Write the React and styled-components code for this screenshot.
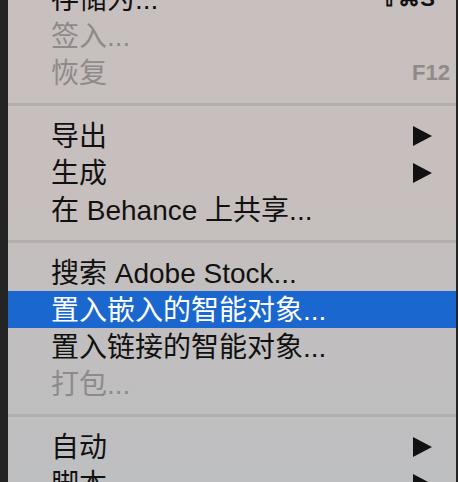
import React from "react";
import styled, { createGlobalStyle } from "styled-components";

const Global = createGlobalStyle`
    html, body {
        margin: 0;
        padding: 0;
        background: #242424;
        overflow: hidden;
    }
`

const Screen = styled.div`
    width: 458px;
    height: 482px;
    overflow: hidden;
    display: flex;
    padding-left: 8px;
    box-sizing: border-box;
`

const Menu = styled.div`
    width: 448px;
    margin-top: -20px;
    display: flex;
    flex-direction: column;
    background: linear-gradient(180deg, #c8c0bf 0%, #c6bfbe 45%, #c0bebf 75%, #bebfc1 100%);
    font-family: "Liberation Sans", "Noto Sans CJK SC", sans-serif;
    font-size: 28px;
    color: #111;
`

const Row = styled.div`
    height: 37px;
    flex: none;
    display: flex;
    align-items: center;
    padding-left: 43px;
    padding-right: 6px;
    color: ${p => p.$disabled ? '#8f8a8a' : p.$active ? '#fff' : '#111'};
    background: ${p => p.$active ? '#1b67d0' : 'transparent'};
`

const Label = styled.span`
    flex: 1;
    white-space: nowrap;
    line-height: 1;
    padding-top: 3px;
`

const Shortcut = styled.span`
    font-family: "Liberation Sans", sans-serif;
    font-weight: bold;
    font-size: 22px;
    margin-right: ${p => p.$gap || 0}px;
`

const Arrow = styled.span`
    width: 0;
    height: 0;
    border-top: 10px solid transparent;
    border-bottom: 10px solid transparent;
    border-left: 19px solid #111;
    margin-right: 18px;
`

const Separator = styled.div`
    height: 26px;
    flex: none;
    display: flex;
    align-items: center;
    &::after {
        content: "";
        width: 100%;
        height: 3px;
        background: #b4aeac;
    }
`

const items = [
    { label: "存储为...", shortcut: "⇧⌘S", gap: 15 },
    { label: "签入...", disabled: true },
    { label: "恢复", disabled: true, shortcut: "F12" },
    "sep",
    { label: "导出", sub: true },
    { label: "生成", sub: true },
    { label: "在 Behance 上共享..." },
    "sep",
    { label: "搜索 Adobe Stock..." },
    { label: "置入嵌入的智能对象...", active: true },
    { label: "置入链接的智能对象..." },
    { label: "打包...", disabled: true },
    "sep",
    { label: "自动", sub: true },
    { label: "脚本", sub: true },
]

const App = () => {
    return (
        <Screen>
            <Global />
            <Menu>
                {items.map((x, i) => x === "sep"
                    ? <Separator key={i} />
                    : (
                        <Row key={i} $disabled={x.disabled} $active={x.active}>
                            <Label>{x.label}</Label>
                            {x.shortcut && <Shortcut $gap={x.gap}>{x.shortcut}</Shortcut>}
                            {x.sub && <Arrow />}
                        </Row>
                    ))}
            </Menu>
        </Screen>
    )
}

export default App;
